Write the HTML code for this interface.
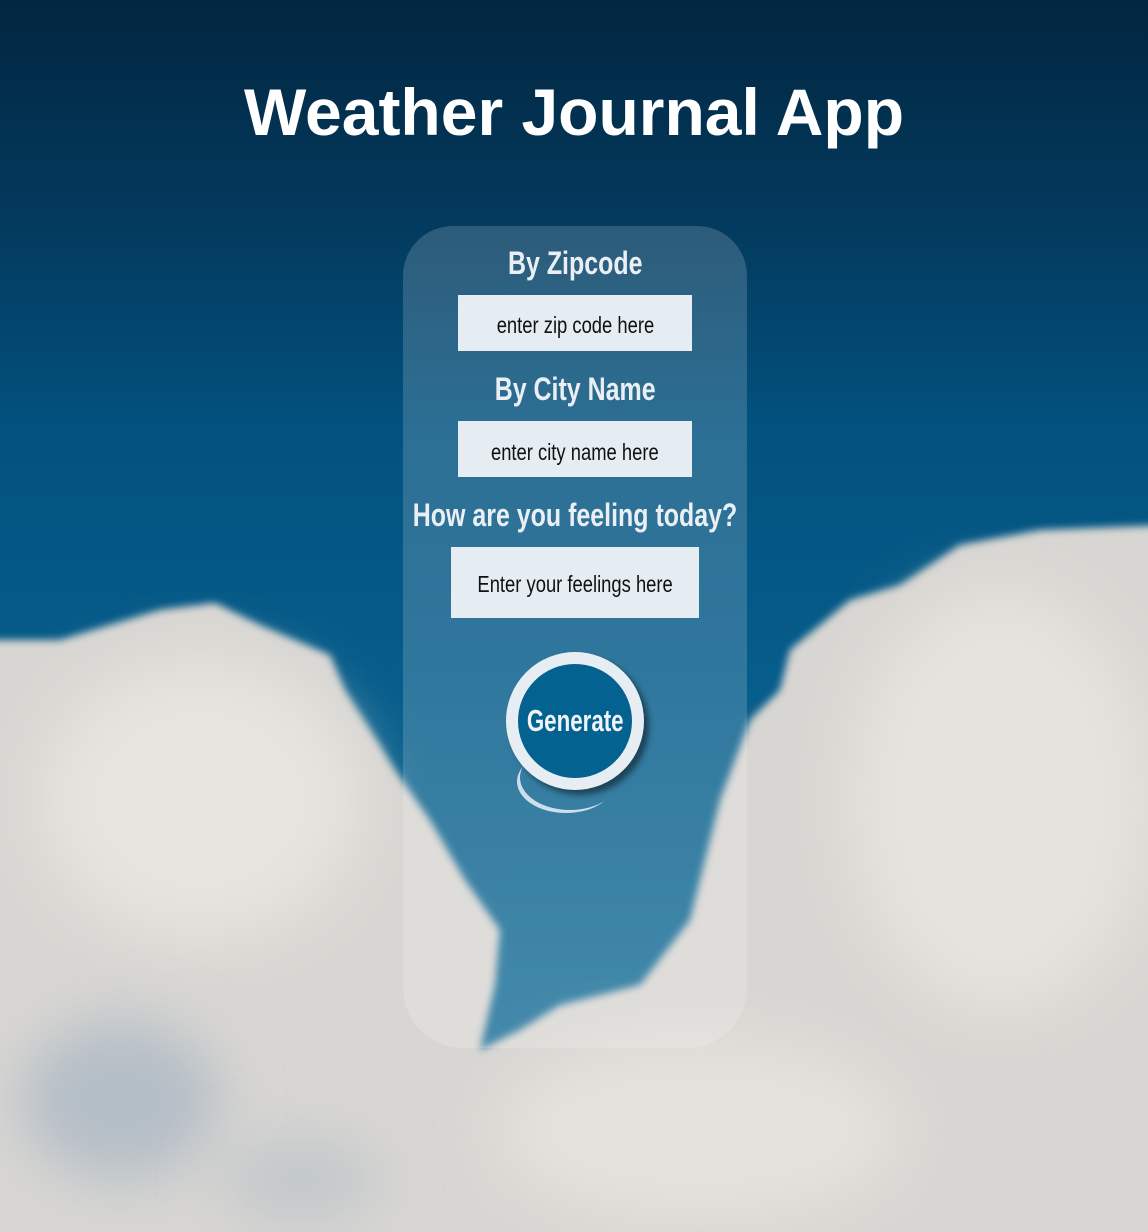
<!DOCTYPE html>
<html><head><meta charset="utf-8"><style>
html,body{margin:0;padding:0;width:1148px;height:1232px;overflow:hidden}
body{position:relative;background:linear-gradient(180deg,#022640 0%,#033a5e 18%,#02527f 35%,#065c8a 55%,#1a6f98 80%,#22739c 100%);font-family:"Liberation Sans",sans-serif}
svg.bg{position:absolute;left:0;top:0}
h1{position:absolute;left:0;right:0;top:74px;margin:0;text-align:center;font:bold 66px "Liberation Sans",sans-serif;color:#fff}
.panel{position:absolute;left:403px;top:226px;width:344px;height:822px;border-radius:50px 50px 60px 60px;background:rgba(255,255,255,0.17)}
.h,.in,.btn{display:flex;align-items:center;justify-content:center;white-space:nowrap}
.h{position:absolute;left:403px;width:344px;height:40px;color:#e9eff4;font-size:32px;font-weight:bold}
.h span{transform:scaleX(0.78)}
.in{position:absolute;background:#e6edf2;color:#111;font-size:23px}
span{display:inline-block;transform:scaleX(0.8)}
.btn{position:absolute;left:506px;top:652px;width:114px;height:114px;border:12px solid #e6eef4;border-radius:50%;background:#03628f;color:#eef4f8;font-size:31px;font-weight:bold;box-shadow:5px 5px 6px rgba(0,0,0,.45)}
.btn span{transform:scaleX(0.72)}
.moon{position:absolute;left:520px;top:745px;width:100px;height:65px;border-radius:50%;box-shadow:-4px 4px 0 -1px rgba(230,240,248,.85)}
</style></head><body>
<svg class="bg" width="1148" height="1232">
<defs><filter id="b" x="-20%" y="-20%" width="140%" height="140%"><feGaussianBlur stdDeviation="4"/></filter><filter id="b2" x="-100%" y="-100%" width="300%" height="300%"><feGaussianBlur stdDeviation="30"/></filter></defs>
<polygon filter="url(#b)" fill="#d8d6d2" points="-20,640 60,640 110,625 160,610 215,603 260,625 330,655 345,690 380,745 395,770 430,820 465,880 500,930 495,985 480,1050 520,1030 560,1005 640,985 690,920 700,880 720,800 750,720 780,690 790,650 850,600 900,585 960,545 1040,530 1170,525 1170,1260 -20,1260"/>
<ellipse filter="url(#b2)" cx="1000" cy="800" rx="150" ry="210" fill="#e6e3de"/>
<ellipse filter="url(#b2)" cx="200" cy="800" rx="160" ry="140" fill="#e6e4df"/>
<ellipse filter="url(#b2)" cx="700" cy="1130" rx="200" ry="90" fill="#e4e2dd"/>
<ellipse filter="url(#b2)" cx="120" cy="1100" rx="100" ry="80" fill="#b4bec6"/>
<ellipse filter="url(#b2)" cx="300" cy="1180" rx="80" ry="40" fill="#c0c6ca"/>
</svg>
<h1>Weather Journal App</h1>
<div class="panel"></div>
<div class="h" style="top:243px"><span>By Zipcode</span></div>
<div class="in" style="left:458px;top:295px;width:234px;height:56px;padding-top:4px;box-sizing:border-box"><span>enter zip code here</span></div>
<div class="h" style="top:369px"><span>By City Name</span></div>
<div class="in" style="left:458px;top:421px;width:234px;height:56px;padding-top:6px;box-sizing:border-box"><span>enter city name here</span></div>
<div class="h" style="top:495px"><span>How are you feeling today?</span></div>
<div class="in" style="left:451px;top:547px;width:248px;height:71px;padding-top:4px;box-sizing:border-box"><span>Enter your feelings here</span></div>
<div class="moon"></div>
<div class="btn"><span>Generate</span></div>
</body></html>
